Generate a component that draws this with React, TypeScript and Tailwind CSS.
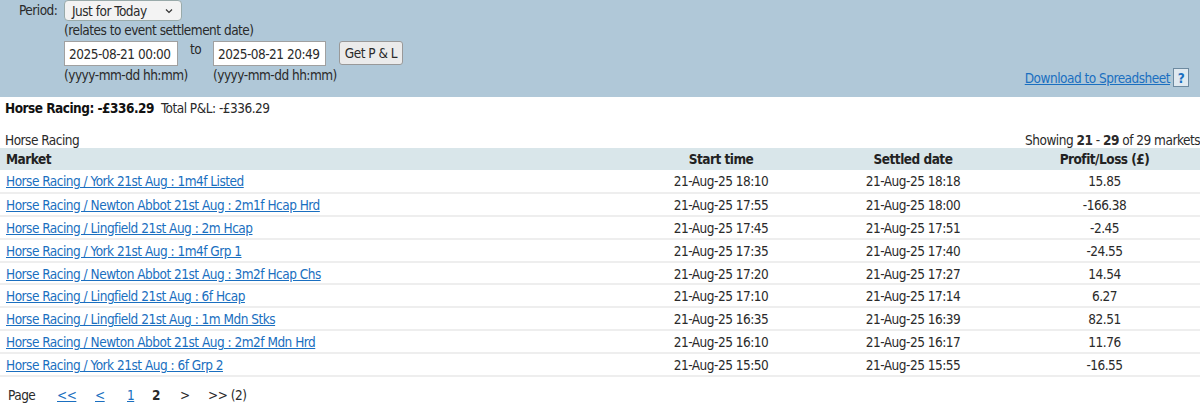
import React from "react";

const rows = [
  ["Horse Racing / York 21st Aug : 1m4f Listed", "21-Aug-25 18:10", "21-Aug-25 18:18", "15.85"],
  ["Horse Racing / Newton Abbot 21st Aug : 2m1f Hcap Hrd", "21-Aug-25 17:55", "21-Aug-25 18:00", "-166.38"],
  ["Horse Racing / Lingfield 21st Aug : 2m Hcap", "21-Aug-25 17:45", "21-Aug-25 17:51", "-2.45"],
  ["Horse Racing / York 21st Aug : 1m4f Grp 1", "21-Aug-25 17:35", "21-Aug-25 17:40", "-24.55"],
  ["Horse Racing / Newton Abbot 21st Aug : 3m2f Hcap Chs", "21-Aug-25 17:20", "21-Aug-25 17:27", "14.54"],
  ["Horse Racing / Lingfield 21st Aug : 6f Hcap", "21-Aug-25 17:10", "21-Aug-25 17:14", "6.27"],
  ["Horse Racing / Lingfield 21st Aug : 1m Mdn Stks", "21-Aug-25 16:35", "21-Aug-25 16:39", "82.51"],
  ["Horse Racing / Newton Abbot 21st Aug : 2m2f Mdn Hrd", "21-Aug-25 16:10", "21-Aug-25 16:17", "11.76"],
  ["Horse Racing / York 21st Aug : 6f Grp 2", "21-Aug-25 15:50", "21-Aug-25 15:55", "-16.55"],
];

export default function App() {
  return (
    <div className="w-[1200px] h-[407px] bg-white text-[#2a2a2a] text-[13.5px] leading-[16px] tracking-[-0.5px] overflow-hidden" style={{ fontFamily: '"DejaVu Sans Condensed", "DejaVu Sans", sans-serif' }}>
      <div className="bg-[#b0c8d8] h-[97px] relative">
        <div className="flex">
          <div className="w-[64px] pl-[19px] pt-[2px]">Period:</div>
          <div className="flex flex-col">
            <div className="w-[118px] h-[21px] bg-[#f3f3f3] border border-[#9aa] rounded-[4px] flex items-center justify-between px-[7px]">
              <span>Just for Today</span>
              <svg width="8" height="6" viewBox="0 0 8 6" className="mr-[1px]"><path d="M1 1.5 L4 4.5 L7 1.5" stroke="#333" strokeWidth="1.2" fill="none" /></svg>
            </div>
            <div className="h-[18px] leading-[18px]">(relates to event settlement date)</div>
            <div className="flex items-start mt-[2px]">
              <div className="flex flex-col w-[114px]">
                <div className="w-[114px] h-[25px] bg-white border border-[#a0a0a0] flex items-center pl-[4px]">2025-08-21 00:00</div>
                <div className="mt-[1px] whitespace-nowrap">(yyyy-mm-dd hh:mm)</div>
              </div>
              <div className="w-[35px] text-center">to</div>
              <div className="flex flex-col w-[113px]">
                <div className="w-[113px] h-[25px] bg-white border border-[#a0a0a0] flex items-center pl-[4px]">2025-08-21 20:49</div>
                <div className="mt-[1px] whitespace-nowrap">(yyyy-mm-dd hh:mm)</div>
              </div>
              <div className="ml-[13px] w-[64px] h-[24px] bg-[#ebebeb] border border-[#999] rounded-[3px] flex items-center justify-center">Get P &amp; L</div>
            </div>
          </div>
        </div>
        <div className="absolute right-[11px] top-[68px] flex items-center gap-[3px]">
          <span className="text-[#1a6fc0] underline">Download to Spreadsheet</span>
          <span className="w-[16px] h-[19px] border border-[#6d8aa0] bg-[#dfe9f0] text-[#1a6fc0] font-bold flex items-center justify-center">?</span>
        </div>
      </div>

      <div className="px-[5px] pt-[3px] h-[21px] flex gap-[7px]">
        <span className="font-bold text-[#111]">Horse Racing: -£336.29</span>
        <span>Total P&amp;L: -£336.29</span>
      </div>

      <div className="flex justify-between mt-[14px] pl-[5px] h-[16px]">
        <span>Horse Racing</span>
        <span>
          Showing <b>21</b> - <b>29</b> of 29 markets
        </span>
      </div>

      <table className="w-[1200px] border-collapse table-fixed">
        <colgroup>
          <col className="w-[625px]" />
          <col className="w-[192px]" />
          <col className="w-[192px]" />
          <col />
        </colgroup>
        <thead>
          <tr className="bg-[#d9e6ea] h-[22px] font-bold text-[#222]">
            <th className="text-left pl-[6px] font-bold">Market</th>
            <th className="font-bold">Start time</th>
            <th className="font-bold">Settled date</th>
            <th className="font-bold">Profit/Loss (£)</th>
          </tr>
        </thead>
        <tbody>
          {rows.map((r) => (
            <tr key={r[0] + r[1]} className="h-[22.9px] border-b-2 border-[#eeeeee]">
              <td className="pl-[6px] pt-[1px]">
                <span className="text-[#1a6fc0] underline">{r[0]}</span>
              </td>
              <td className="text-center pt-[1px]">{r[1]}</td>
              <td className="text-center pt-[1px]">{r[2]}</td>
              <td className="text-center pt-[1px]">{r[3]}</td>
            </tr>
          ))}
        </tbody>
      </table>

      <div className="flex items-center h-[30px] pl-[8px] mt-[3px]">
        <span className="w-[49px]">Page</span>
        <span className="w-[38px] text-[#1a6fc0] underline">&lt;&lt;</span>
        <span className="w-[32px] text-[#1a6fc0] underline">&lt;</span>
        <span className="w-[25px] text-[#1a6fc0] underline">1</span>
        <span className="w-[28px] font-bold">2</span>
        <span className="w-[28px]">&gt;</span>
        <span>&gt;&gt; (2)</span>
      </div>
    </div>
  );
}
